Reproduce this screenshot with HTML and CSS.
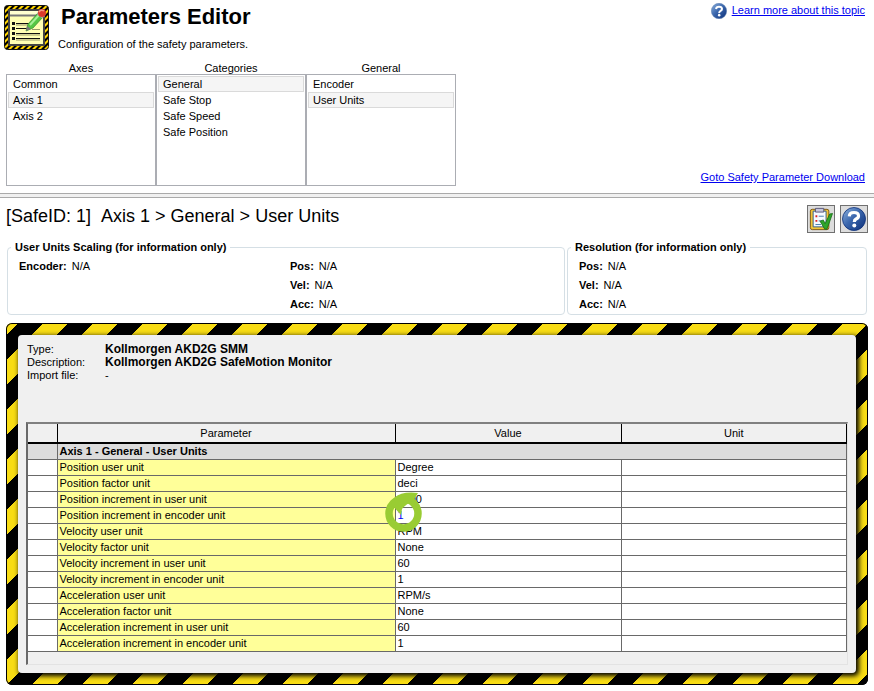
FILE: index.html
```html
<!DOCTYPE html>
<html lang="en">
<head>
  <meta charset="UTF-8">
  <title>Parameters Editor</title>
  <link rel="stylesheet" href="styles.css">
</head>
<body>

  <header class="top">
    <div class="title-bar">
      <svg class="logo" viewBox="0 0 45 45" aria-hidden="true">
        <defs>
          <pattern id="hazard" width="6" height="6" patternUnits="userSpaceOnUse">
            <rect width="6" height="6" fill="#ffd400"/>
            <path d="M0 3L3 0H6L0 6ZM6 3V6H3Z" fill="#000"/>
          </pattern>
        </defs>
        <rect x="0.5" y="0.5" width="44" height="44" rx="3" fill="url(#hazard)" stroke="#111"/>
        <rect x="5" y="5" width="35" height="35" fill="#ffffb4" stroke="#444" stroke-width="2"/>
        <path d="M6 6H39V10H6Z" fill="#ffffd0"/>
        <path d="M6 10.500H34" stroke="#777" stroke-width="2"/>
        <path d="M8 17h3v3H8zM8 22h3v3H8zM8 27h3v3H8zM8 32h3v3H8z" fill="#111"/>
        <path d="M12 18.500H25M12 23.500H23M12 28.500H36M12 33.500H36" stroke="#111"/>
        <path d="M12 20H24M28 24.500H36M12 30H36M12 35H36" stroke="#99996a"/>
        <path d="M22 26L24 19L34 8L39 12L29 23Z" fill="#55c744" stroke="#348e2e" stroke-width="0.700"/>
        <path d="M26 20L35 10" stroke="#a8ef98" stroke-width="2"/>
        <path d="M22 26L23 21L27 24Z" fill="#777"/>
        <path d="M33 9L35 6L41 11L38 13Z" fill="#ddd" stroke="#888" stroke-width="0.500"/>
        <circle cx="38" cy="8" r="4" fill="#db3b2d"/>
        <path d="M35 7Q37 4 40 6" stroke="#f49a88" stroke-width="1.500" fill="none"/>
      </svg>
      <div class="title-text">
        <h1>Parameters Editor</h1>
        <p>Configuration of the safety parameters.</p>
      </div>
      <a class="learn" href="#help">
        <svg class="learn-icon" viewBox="0 0 24 24" aria-hidden="true">
          <defs>
            <linearGradient id="blue" x1="0" y1="0" x2="1" y2="1">
              <stop offset="0" stop-color="#8fb4e0"/>
              <stop offset="0.450" stop-color="#3c68ae"/>
              <stop offset="1" stop-color="#0c2f78"/>
            </linearGradient>
          </defs>
          <circle cx="12" cy="12" r="11.500" fill="url(#blue)" stroke="#5d7fb0" stroke-width="0.800"/>
          <path d="M7.500 9Q8 5.500 12 5.500Q16.500 5.500 16.500 9Q16.500 11 14 12Q12.300 13 12.300 15" fill="none" stroke="#fff" stroke-width="3"/>
          <circle cx="12.300" cy="18.200" r="1.900" fill="#fff"/>
        </svg>
        <span>Learn more about this topic</span>
      </a>
    </div>

    <div class="picker-row">
      <div class="picker">
        <label for="axes">Axes</label>
        <select id="axes" size="6">
          <option>Common</option>
          <option selected>Axis 1</option>
          <option>Axis 2</option>
        </select>
      </div>
      <div class="picker">
        <label for="categories">Categories</label>
        <select id="categories" size="6">
          <option selected>General</option>
          <option>Safe Stop</option>
          <option>Safe Speed</option>
          <option>Safe Position</option>
        </select>
      </div>
      <div class="picker">
        <label for="general">General</label>
        <select id="general" size="6">
          <option>Encoder</option>
          <option selected>User Units</option>
        </select>
      </div>
      <a class="download" href="#download">Goto Safety Parameter Download</a>
    </div>
  </header>

  <hr class="splitter">

  <main>
    <div class="heading">
      <h2><span>[SafeID: 1]</span> <span>Axis 1 &gt; General &gt; User Units</span></h2>
      <button class="tool" aria-label="Check parameters">
        <svg viewBox="0 0 26 26" aria-hidden="true">
          <rect x="1.500" y="2.500" width="20" height="22" rx="2" fill="#f2c536" stroke="#7a5410"/>
          <path d="M4.500 4.500H18.500V21.500H4.500Z" fill="#f6fbff" stroke="#2e5c87"/>
          <path d="M7 1.500H16V5.500H7Z" fill="#c8c8dc" stroke="#555577"/>
          <path d="M7 9h2v2H7zM7 14h2v2H7z" fill="#d22"/>
          <path d="M10.500 10H16M10.500 15H14M7 19H13" stroke="#3b77a8"/>
          <path d="M12 15.500L15.500 14L17.500 18L22.500 7.500L25.500 7L19.500 24H17Z" fill="#2fa52b" stroke="#116611" stroke-width="0.800"/>
        </svg>
      </button>
      <button class="tool" aria-label="Help">
        <svg viewBox="0 0 24 24" aria-hidden="true">
          <circle cx="12" cy="12" r="11.500" fill="url(#blue)" stroke="#0d2f78" stroke-width="0.800"/>
          <path d="M7.300 9.300Q7.500 5.500 12 5.500Q16.500 5.500 16.500 9Q16.500 11 14 12Q12.300 13 12.300 15" fill="none" stroke="#fff" stroke-width="3.200"/>
          <circle cx="12.300" cy="18.400" r="2" fill="#fff"/>
        </svg>
      </button>
    </div>

    <div class="groups">
      <fieldset class="scaling">
        <legend>User Units Scaling (for information only)</legend>
        <ul>
          <li><b>Encoder:</b> N/A</li>
        </ul>
        <ul>
          <li><b>Pos:</b> N/A</li>
          <li><b>Vel:</b> N/A</li>
          <li><b>Acc:</b> N/A</li>
        </ul>
      </fieldset>
      <fieldset class="resolution">
        <legend>Resolution (for information only)</legend>
        <ul>
          <li><b>Pos:</b> N/A</li>
          <li><b>Vel:</b> N/A</li>
          <li><b>Acc:</b> N/A</li>
        </ul>
      </fieldset>
    </div>

    <section class="hazard">
      <div class="panel">
        <dl class="device">
          <dt>Type:</dt><dd><b>Kollmorgen AKD2G SMM</b></dd>
          <dt>Description:</dt><dd><b>Kollmorgen AKD2G SafeMotion Monitor</b></dd>
          <dt>Import file:</dt><dd>-</dd>
        </dl>

        <div class="grid-box">
          <table>
            <colgroup>
              <col class="col-mark">
              <col class="col-name">
              <col class="col-value">
              <col class="col-unit">
            </colgroup>
            <thead>
              <tr><th></th><th>Parameter</th><th>Value</th><th>Unit</th></tr>
            </thead>
            <tbody>
              <tr class="group"><td></td><td colspan="3">Axis 1 - General - User Units</td></tr>
              <tr><td></td><td class="name">Position user unit</td><td>Degree</td><td></td></tr>
              <tr><td></td><td class="name">Position factor unit</td><td>deci</td><td></td></tr>
              <tr><td></td><td class="name">Position increment in user unit</td><td>3600</td><td></td></tr>
              <tr>
                <td></td><td class="name">Position increment in encoder unit</td>
                <td class="changed">1
                  <svg class="marker" viewBox="0 0 38 41" aria-hidden="true">
                    <circle cx="18.500" cy="21.500" r="14.500" fill="none" stroke="#9c3" stroke-width="7.500"/>
                    <path d="M6 12L16 23L17 17Q21 12 28 9L33 1Q17 -1 9 6Z" fill="#9c3"/>
                  </svg>
                </td><td></td>
              </tr>
              <tr><td></td><td class="name">Velocity user unit</td><td>RPM</td><td></td></tr>
              <tr><td></td><td class="name">Velocity factor unit</td><td>None</td><td></td></tr>
              <tr><td></td><td class="name">Velocity increment in user unit</td><td>60</td><td></td></tr>
              <tr><td></td><td class="name">Velocity increment in encoder unit</td><td>1</td><td></td></tr>
              <tr><td></td><td class="name">Acceleration user unit</td><td>RPM/s</td><td></td></tr>
              <tr><td></td><td class="name">Acceleration factor unit</td><td>None</td><td></td></tr>
              <tr><td></td><td class="name">Acceleration increment in user unit</td><td>60</td><td></td></tr>
              <tr><td></td><td class="name">Acceleration increment in encoder unit</td><td>1</td><td></td></tr>
            </tbody>
          </table>
        </div>
      </div>
    </section>
  </main>

</body>
</html>
```
FILE: styles.css
```css
* {
  box-sizing: border-box;
}

body {
  margin: 0;
  background: #fff;
  color: #000;
  font-family: "Liberation Sans", Arial, sans-serif;
  font-size: 11px;
  line-height: 16px;
}

h1, h2, p, ul, dl, dd {
  margin: 0;
  padding: 0;
}

a {
  color: #0000f0;
}

/* top area */
.top {
  padding: 3px 9px 7px 4px;
}

.title-bar {
  display: flex;
  align-items: flex-start;
  height: 57px;
}

.logo {
  width: 45px;
  height: 45px;
  margin-top: 2px;
}

.title-text {
  flex: 1;
  padding-left: 9px;
}

h1 {
  padding-left: 3px;
  font-size: 22px;
  line-height: 28px;
  margin-bottom: 5px;
}

.learn {
  display: flex;
  gap: 5px;
  line-height: 14px;
}

.learn-icon {
  width: 16px;
  height: 16px;
}

.picker-row {
  display: flex;
  padding-left: 2px;
}

.picker {
  display: flex;
  flex-direction: column;
  width: 150px;
}

.picker label {
  height: 14px;
  text-align: center;
}

.picker select {
  height: 112px;
  padding: 1px;
  border: 1px solid #abadb3;
  border-radius: 0;
  background: #fff;
  font: inherit;
  outline: none;
  overflow: hidden;
}

.picker option {
  height: 16px;
  min-height: 16px;
  padding: 1px 4px 0;
  border: 1px solid transparent;
  line-height: 14px;
  color: #000;
}

.picker option:checked {
  border-color: #dadada;
  background: #f5f5f5 linear-gradient(#f5f5f5, #f5f5f5);
  color: #000;
}

.download {
  align-self: flex-end;
  margin-left: auto;
  padding-bottom: 1px;
}

.splitter {
  height: 5px;
  margin: 0;
  border: solid #aaa;
  border-width: 1px 0;
  background: #f0f0f0;
}

/* parameter area */
main {
  padding: 7px 6px 6px;
}

.heading {
  display: flex;
  gap: 5px;
}

h2 {
  display: flex;
  flex: 1;
  gap: 10px;
  font-size: 18px;
  font-weight: normal;
  line-height: 22px;
}

.tool {
  width: 28px;
  height: 28px;
  padding: 1px;
  border: 1px solid #707070;
  background: #ddd;
}

.tool svg {
  display: block;
  width: 24px;
  height: 24px;
}

.groups {
  display: flex;
  gap: 2px;
  padding: 6px 1px 8px;
}

fieldset {
  margin: 0;
  padding: 2px 11px 0;
  border: 1px solid #d5dfe5;
  border-radius: 4px;
}

legend {
  margin-left: -8px;
  padding: 0 4px;
  font-weight: bold;
}

.scaling {
  display: grid;
  grid-template-columns: 1fr 1fr;
  gap: 8px;
  flex: 1;
}

.resolution {
  width: 300px;
}

fieldset ul {
  list-style: none;
}

fieldset li {
  display: flex;
  gap: 5px;
  line-height: 19px;
}

.hazard {
  padding: 12px;
  border-radius: 6px;
  background: linear-gradient(135deg, #f8dc14 13%, #000 13%, #000 38%, #f8dc14 38%, #f8dc14 63%, #000 63%, #000 88%, #f8dc14 88%) 0 0 / 50px 50px;
  box-shadow: inset 0 0 0 1px #000;
}

.panel {
  padding: 8px;
  border-radius: 4px;
  background: #f0f0f0;
  box-shadow: 2px 2px 5px 1px #000;
}

.device {
  display: grid;
  grid-template-columns: 78px 1fr;
  padding: 0 1px;
  line-height: 13px;
  min-height: 79px;
  align-content: start;
}

.device b {
  font-size: 12px;
}

/* parameter table */
.grid-box {
  padding-bottom: 12px;
  border: 1px solid #e3e3e3;
  border-top: 2px solid #808080;
  border-left: 2px solid #696969;
}

table {
  width: 100%;
  table-layout: fixed;
  border-collapse: collapse;
}

.col-mark {
  width: 29px;
}

.col-name {
  width: 338px;
}

.col-value {
  width: 226px;
}

th {
  height: 19px;
  padding: 0;
  border-right: 1px solid #000;
  border-bottom: 2px solid #000;
  font-weight: normal;
}

td {
  height: 16px;
  padding: 0 2px;
  border: 1px solid #696969;
  border-left: 0;
  background: #fff;
  line-height: 15px;
}

.group td {
  background: #dcdcdc;
  font-weight: bold;
}

td.name {
  background: #ff9;
}

.changed {
  position: relative;
  color: #0000f0;
}

.marker {
  position: absolute;
  top: -16px;
  left: -11px;
  width: 38px;
  height: 41px;
}
```
